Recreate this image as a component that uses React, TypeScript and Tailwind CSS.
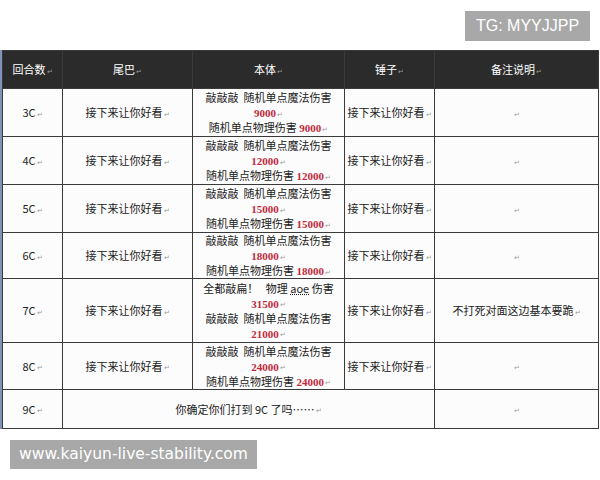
import React from 'react';

const cjk = '"Noto Sans CJK SC", "Noto Sans", sans-serif';

// Word paragraph mark that the original table shows after every cell
function Mark() {
    return <span className="ml-[1px] align-middle text-[7px] leading-none text-[#9a9a9a]">↵</span>;
}

function Num({ v }: { v: string }) {
    return (
        <span className="font-bold leading-none text-[#c2283a]" style={{ fontFamily: '"Liberation Serif", serif' }}>
            {v}
        </span>
    );
}

function BodyCell({ lines }: { lines: React.ReactNode[] }) {
    return (
        <div className="flex flex-col items-center">
            {lines.map((l, i) => (
                <div key={i} className="h-[15px] leading-[15px] whitespace-nowrap">
                    {l}
                </div>
            ))}
        </div>
    );
}

const knock = <>敲敲敲&nbsp;&nbsp;随机单点魔法伤害</>;

function std(n: string) {
    return [
        knock,
        <>
            <Num v={n} />
            <Mark />
        </>,
        <>
            随机单点物理伤害 <Num v={n} />
            <Mark />
        </>,
    ];
}

const rows: { round: string; h: string; body: React.ReactNode[]; note?: string }[] = [
    { round: '3C', h: 'h-[48px]', body: std('9000') },
    { round: '4C', h: 'h-[48px]', body: std('12000') },
    { round: '5C', h: 'h-[48px]', body: std('15000') },
    { round: '6C', h: 'h-[46px]', body: std('18000') },
    {
        round: '7C',
        h: 'h-[64px]',
        body: [
            <>
                全都敲扁！&nbsp;&nbsp;&nbsp;物理 <span className="underline decoration-dotted">aoe</span> 伤害
            </>,
            <>
                <Num v="31500" />
                <Mark />
            </>,
            knock,
            <>
                <Num v="21000" />
                <Mark />
            </>,
        ],
        note: '不打死对面这边基本要跪',
    },
    { round: '8C', h: 'h-[47px]', body: std('24000') },
];

const th = 'border-[1.5px] border-[#3a3a3a] bg-[#2b2b2b] p-0 text-white font-normal';
const td = 'border-[1.5px] border-[#3a3a3a] p-0 text-center align-middle';

export default function App() {
    return (
        <div className="relative h-[480px] w-[600px] overflow-hidden bg-white" style={{ fontFamily: cjk }}>
            <div className="pt-[50px]">
                <div className="w-[598px] border-l-2 border-[#8193bb]">
                    <table className="w-[596px] table-fixed border-collapse text-[11px] leading-[15px] text-[#222]">
                        <colgroup>
                            <col className="w-[60px]" />
                            <col className="w-[130px]" />
                            <col className="w-[152px]" />
                            <col className="w-[90px]" />
                            <col className="w-[164px]" />
                        </colgroup>
                        <thead>
                            <tr className="h-[38px]">
                                <th className={th}>回合数<Mark /></th>
                                <th className={th}>尾巴<Mark /></th>
                                <th className={th}>本体<Mark /></th>
                                <th className={th}>锤子<Mark /></th>
                                <th className={th}>备注说明<Mark /></th>
                            </tr>
                        </thead>
                        <tbody className="bg-[#fcfcfc]">
                            {rows.map((r) => (
                                <tr key={r.round} className={r.h}>
                                    <td className={td}>
                                        {r.round}
                                        <Mark />
                                    </td>
                                    <td className={td}>
                                        接下来让你好看
                                        <Mark />
                                    </td>
                                    <td className={td}>
                                        <BodyCell lines={r.body} />
                                    </td>
                                    <td className={td}>
                                        接下来让你好看
                                        <Mark />
                                    </td>
                                    <td className={td}>
                                        {r.note}
                                        <Mark />
                                    </td>
                                </tr>
                            ))}
                            <tr className="h-[39px]">
                                <td className={td}>
                                    9C
                                    <Mark />
                                </td>
                                <td className={td} colSpan={3}>
                                    你确定你们打到 9C 了吗……
                                    <Mark />
                                </td>
                                <td className={td}>
                                    <Mark />
                                </td>
                            </tr>
                        </tbody>
                    </table>
                </div>
            </div>

            {/* watermarks laid over the picture */}
            <div
                className="absolute left-[465px] top-[11px] flex h-[30px] w-[125px] items-center justify-center bg-[#a8a8a8] text-[16px] text-white"
                style={{ fontFamily: '"Liberation Sans", sans-serif' }}
            >
                TG: MYYJJPP
            </div>
            <div
                className="absolute left-[10px] top-[440px] flex h-[29px] w-[247px] items-center justify-center bg-[#a8a8a8] text-[15.5px] text-white"
                style={{ fontFamily: '"DejaVu Sans", sans-serif' }}
            >
                www.kaiyun-live-stability.com
            </div>
        </div>
    );
}
